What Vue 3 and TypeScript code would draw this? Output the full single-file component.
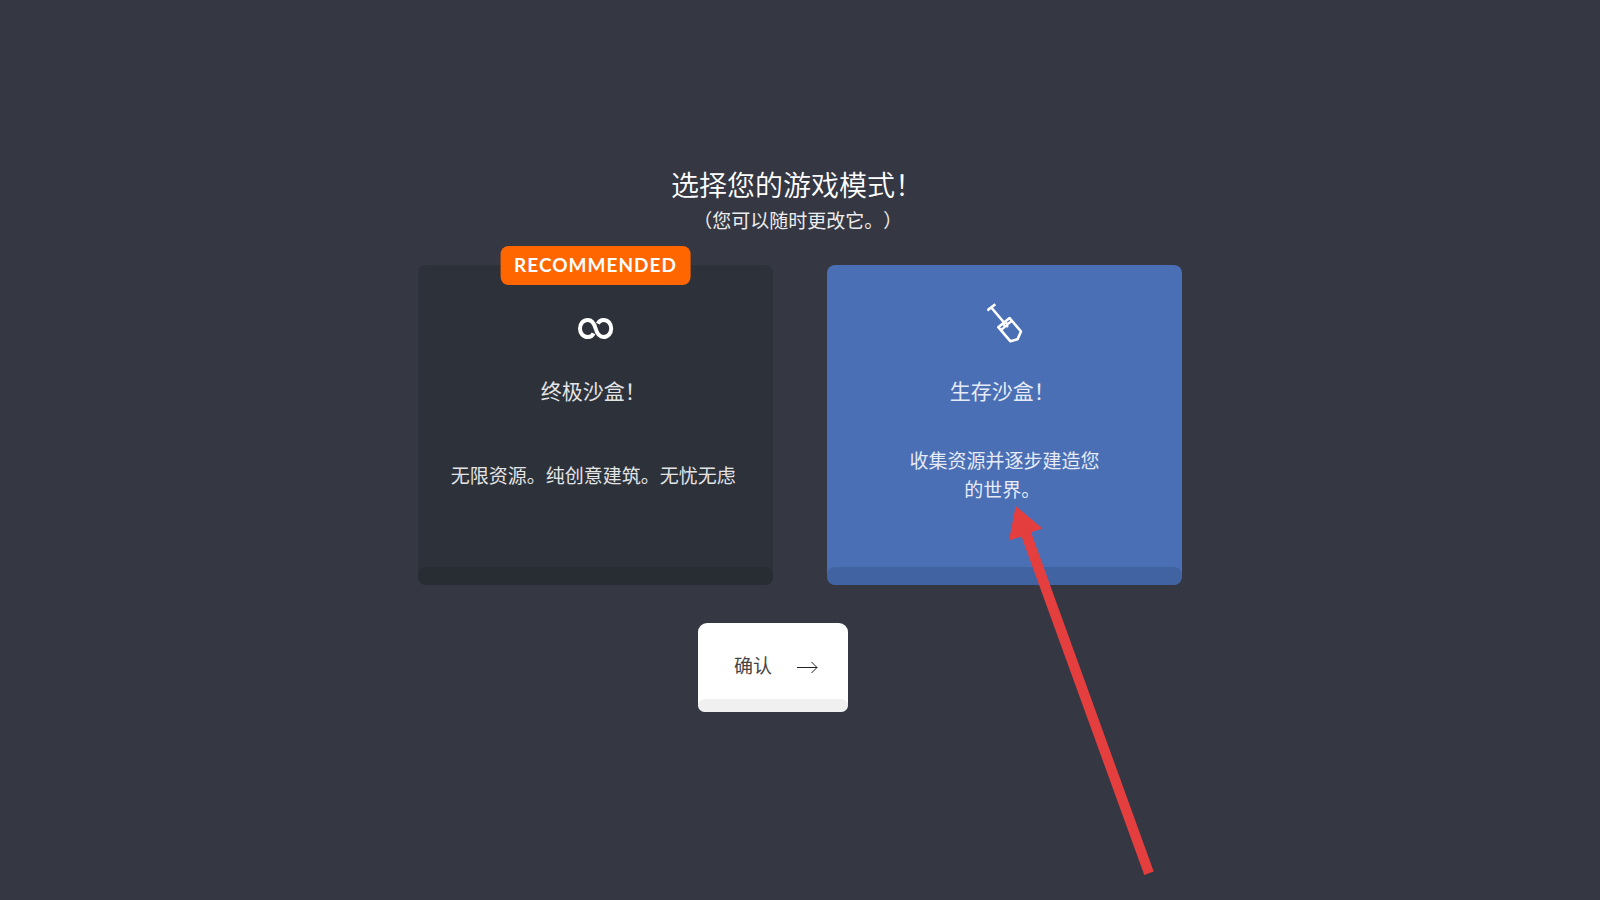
<script setup lang="ts">
import { ref } from 'vue'

interface GameMode {
  id: string
  title: string
  description: string
  badge?: string
}

const modes: GameMode[] = [
  {
    id: 'ultimate',
    title: '终极沙盒！\u00a0',
    description: '无限资源。纯创意建筑。无忧无虑\u00a0',
    badge: 'RECOMMENDED',
  },
  {
    id: 'survival',
    title: '生存沙盒！\u00a0',
    description: '收集资源并逐步建造您\n的世界。\u00a0',
  },
]

const selected = ref('survival')
</script>

<template>
  <main class="page">
    <header class="heading">
      <h1>选择您的游戏模式！&nbsp;</h1>
      <p>（您可以随时更改它。）&nbsp;</p>
    </header>

    <div class="modes">
      <button
        v-for="mode in modes"
        :key="mode.id"
        type="button"
        class="card"
        :class="{ selected: selected === mode.id }"
        :aria-pressed="selected === mode.id"
        @click="selected = mode.id"
      >
        <span v-if="mode.badge" class="badge">{{ mode.badge }}</span>
        <span class="icon">
          <svg v-if="mode.id === 'ultimate'" width="36" height="40" viewBox="0 0 36 40" fill="none" stroke="#fff" stroke-width="4" aria-hidden="true">
            <path d="M15.600 30.300C14.300 33 12 34 9.800 34C5.200 34 2 30.300 2 25.500C2 20.700 5.200 17 9.800 17C14.500 17 16.200 20.500 17.600 25.500C19 30.500 20.800 34 25.400 34C30 34 33.200 30.300 33.200 25.500C33.200 20.700 30 17 25.400 17C23 17 21 18.200 19.800 20.700" />
          </svg>
          <svg v-else width="36" height="40" viewBox="0 0 36 40" fill="none" stroke="#fff" stroke-width="2.600" stroke-linejoin="round" aria-hidden="true">
            <path d="M.3 7.500L8.300 1.200M4.300 4.500L18.300 21M11.300 24.200L22.600 15L34 28.500L30.500 36.300L23.500 38.300Z" />
            <path d="M14 27.200L19.300 22.700L20.300 23.300L20.100 21.700L24.800 17.800M15.800 20.500L18.300 23.500M18.100 18.600L20.600 21.600" stroke-width="2.300" />
          </svg>
        </span>
        <span class="title">{{ mode.title }}</span>
        <span class="description">{{ mode.description }}</span>
        <svg v-if="mode.id === 'survival'" class="pointer" width="146" height="371" viewBox="0 0 146 371" aria-hidden="true">
          <path fill="#e53e3e" d="M6.700 0L33.500 22.500L22 26.300L144.700 365.500L135.300 369L12.500 30.500L0 34.500Z" />
        </svg>
      </button>
    </div>

    <button type="button" class="confirm">
      <span>确认</span>
      <svg width="21" height="12" viewBox="0 0 21 12" fill="none" stroke="#222" aria-hidden="true">
        <path d="M0 6.500H20M14.500 1L20 6.500L14.500 12" />
      </svg>
    </button>
  </main>
</template>

<style>
body {
  margin: 0;
  background: #353743;
}
</style>

<style scoped>
.page {
  box-sizing: border-box;
  min-height: 100vh;
  padding: 0 24px 22px;
  display: flex;
  flex-direction: column;
  align-items: center;
  justify-content: center;
  background: #353743;
  color: #fff;
  font-family: "Noto Sans CJK SC", sans-serif;
  text-spacing-trim: space-all;
}

.heading {
  margin-bottom: 30px;
  text-align: center;
}

h1,
p {
  margin: 0;
  font-weight: 400;
}

h1 {
  font-size: 28px;
  line-height: 36px;
  font-weight: 350;
}

p {
  margin-top: 3px;
  font-size: 19px;
  line-height: 30px;
  color: #ededee;
}

button {
  border: 0;
  font: inherit;
  text-spacing-trim: inherit;
  cursor: pointer;
}

.modes {
  display: flex;
  gap: 54px;
}

.card {
  position: relative;
  box-sizing: border-box;
  width: 355px;
  min-height: 320px;
  padding: 38px 16px 42px;
  display: flex;
  flex-direction: column;
  align-items: center;
  border-radius: 8px;
  background: #2d3139;
  color: #e3e4e5;
}

.card.selected {
  background: #4a6fb5;
  color: #e6ebf5;
}

.card::after,
.confirm::after {
  content: "";
  position: absolute;
  left: 0;
  right: 0;
  bottom: 0;
  height: 18px;
  border-radius: 8px;
  background: rgba(0, 0, 0, 0.1);
}

.badge {
  position: absolute;
  top: -19px;
  left: 50%;
  transform: translateX(-50%);
  padding: 0 14px 2px;
  border-radius: 8px;
  background: #ff6600;
  color: #fff;
  font-family: Lato, sans-serif;
  font-size: 19px;
  font-weight: 700;
  letter-spacing: 1px;
  line-height: 37px;
}

.icon {
  display: flex;
  height: 40px;
}

.title {
  margin-top: 32px;
  font-size: 21px;
  line-height: 30px;
}

.description {
  flex: 1;
  display: flex;
  align-items: center;
  font-size: 19px;
  line-height: 29px;
  white-space: pre-line;
}

.pointer {
  position: absolute;
  z-index: 1;
  top: 241px;
  left: 182px;
  pointer-events: none;
}

.confirm {
  position: relative;
  margin: 38px 54px 0 0;
  padding: 27px 30px 32px 36px;
  display: flex;
  align-items: center;
  gap: 25px;
  border-radius: 9px;
  background: #fff;
  color: #444;
  font-size: 19px;
  line-height: 30px;
}

.confirm svg {
  margin-top: 4px;
}

.confirm::after {
  height: 13px;
  border-radius: 9px;
  background: #f0f0f0;
}
</style>
